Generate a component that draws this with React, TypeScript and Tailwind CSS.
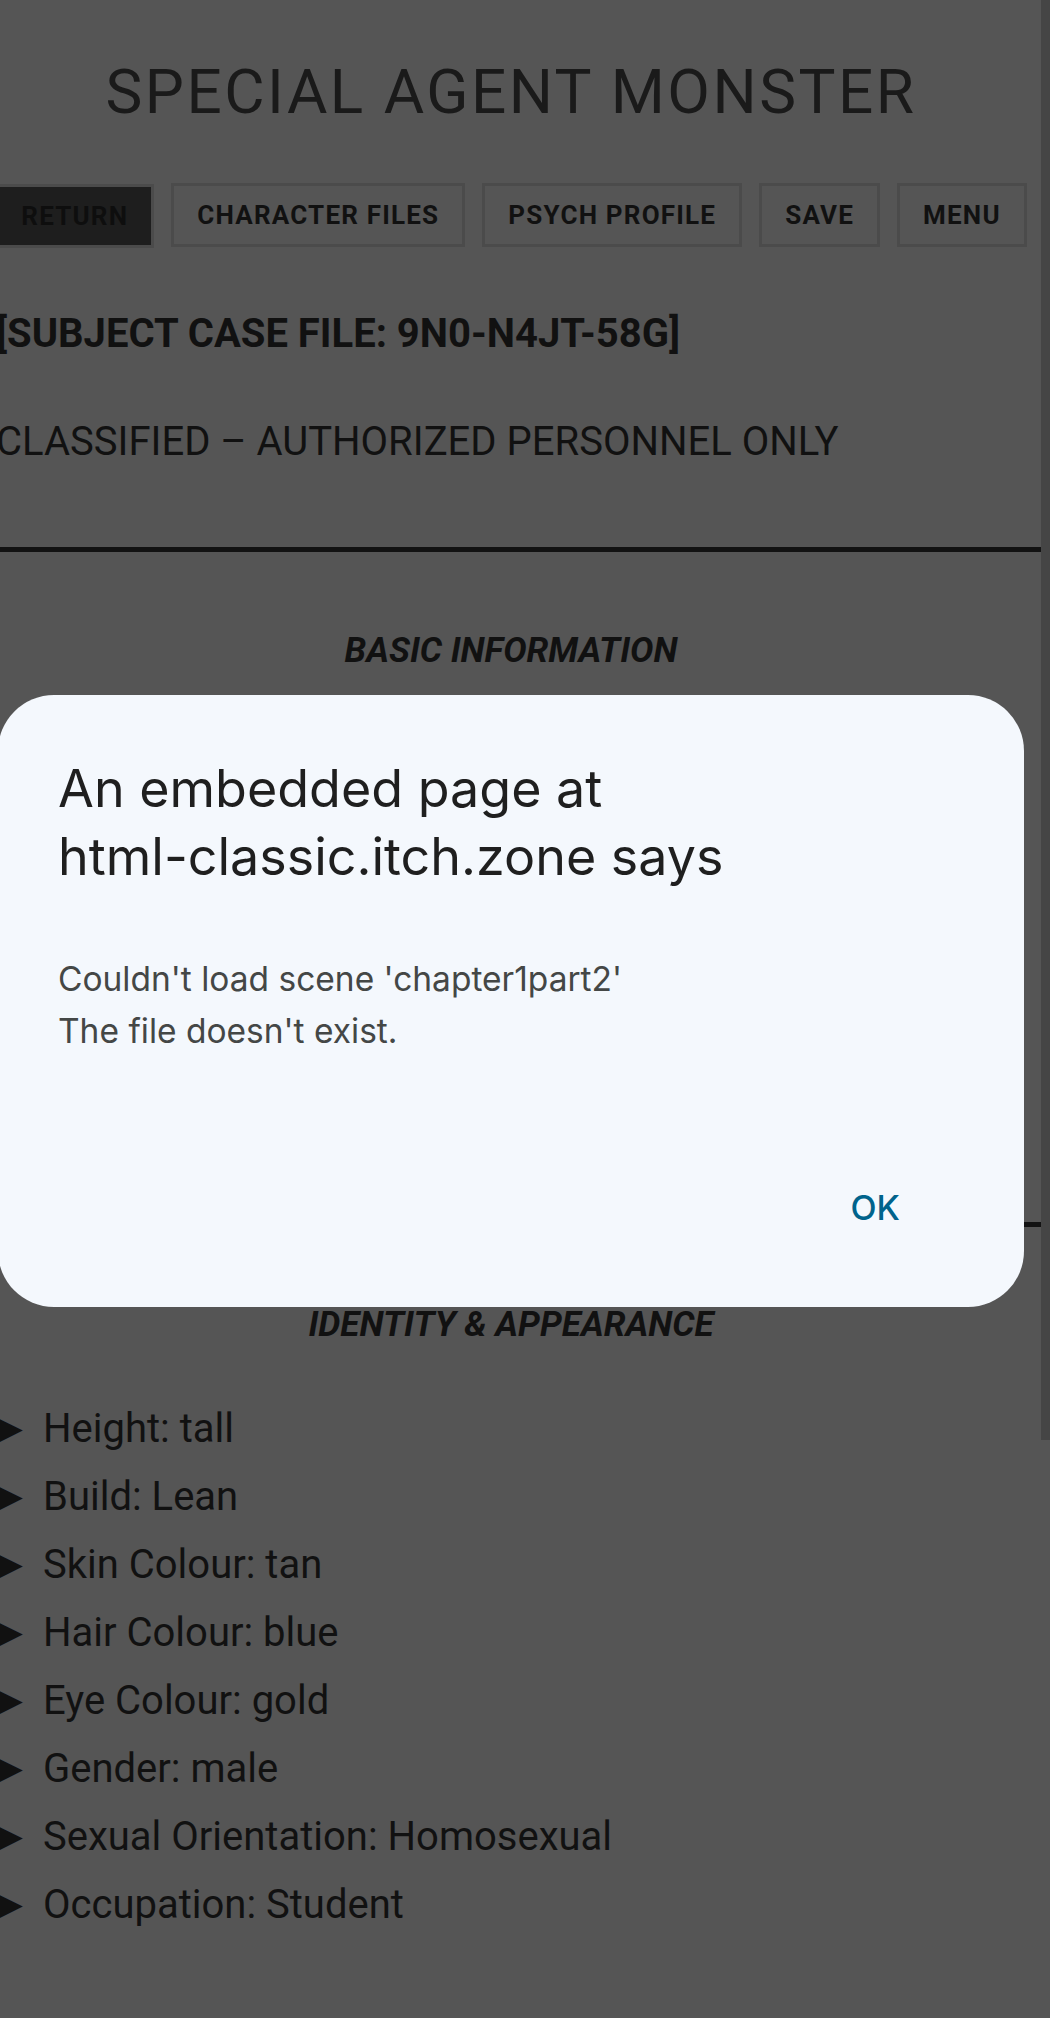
import React from "react";

const items = [
  "Height: tall",
  "Build: Lean",
  "Skin Colour: tan",
  "Hair Colour: blue",
  "Eye Colour: gold",
  "Gender: male",
  "Sexual Orientation: Homosexual",
  "Occupation: Student",
];

const buttons = ["CHARACTER FILES", "PSYCH PROFILE", "SAVE", "MENU"];

export default function App() {
  return (
    <div
      className="relative flex h-[2018px] w-[1050px] overflow-hidden bg-[#555555] text-[#111111]"
      style={{ fontFamily: "Roboto, 'DejaVu Sans', sans-serif" }}
    >
      <main className="w-[1041px] shrink-0 overflow-hidden">
        <div className="-ml-[4px] flex w-[1030px] flex-col pt-[56px]">
          <h1 className="text-center text-[62px] font-normal leading-[72px] tracking-[2.5px] text-[#1a1a1a]">
            SPECIAL AGENT MONSTER
          </h1>

          <nav className="mt-[55px] flex justify-center gap-[17px] whitespace-nowrap">
            <button className="translate-y-[1px] border-[3px] border-[#4b4b4b] bg-[#1e1e1e] px-[23px] py-[14px] text-[26px] font-bold leading-[30px] tracking-[1.2px] text-[#0e0e0e]">
              RETURN
            </button>
            {buttons.map((b) => (
              <button
                key={b}
                className="border-[3px] border-[#4b4b4b] px-[23px] py-[14px] text-[26px] font-bold leading-[30px] tracking-[1.2px] text-[#111111]"
              >
                {b}
              </button>
            ))}
          </nav>

          <h2 className="mt-[63px] whitespace-nowrap text-[40px] font-bold leading-[48px]">
            [SUBJECT CASE FILE: 9N0-N4JT-58G]
          </h2>
          <p className="mt-[60px] whitespace-nowrap text-[40px] font-normal leading-[48px]">
            CLASSIFIED – AUTHORIZED PERSONNEL ONLY
          </p>

          <div className="mt-[81px] h-[5px] w-[1055px] bg-[#121212]" />

          <h3 className="mt-[79px] text-center text-[35px] font-bold italic leading-[40px]">
            BASIC INFORMATION
          </h3>
          <div className="h-[551px]" />

          <div className="h-[5px] w-[1055px] bg-[#121212]" />

          <h3 className="mt-[78px] text-center text-[35px] font-bold italic leading-[40px]">
            IDENTITY &amp; APPEARANCE
          </h3>

          <ul className="mt-[49px] flex flex-col">
            {items.map((it) => (
              <li
                key={it}
                className="flex h-[68px] items-baseline whitespace-nowrap text-[40px] leading-[68px]"
              >
                <span
                  className="-ml-[5px] w-[52px] shrink-0 text-[40px] leading-[68px]"
                  style={{ fontFamily: "'Liberation Sans', sans-serif" }}
                >
                  ►
                </span>
                <span className="leading-[68px]">{it}</span>
              </li>
            ))}
          </ul>
        </div>
      </main>

      <div className="w-[9px] shrink-0">
        <div className="h-[1440px] w-full bg-[#454545]" />
      </div>

      <div
        className="absolute left-[-2px] top-[695px] flex h-[612px] w-[1026px] flex-col rounded-[56px] bg-[#f4f8fd] pl-[60px] pt-[60px]"
        style={{ fontFamily: "Inter, 'Open Sans', sans-serif" }}
      >
        <div className="text-[52px] font-normal leading-[68px] text-[#1f1f1f]">
          <div className="whitespace-nowrap">An embedded page at</div>
          <div className="whitespace-nowrap">html-classic.itch.zone says</div>
        </div>
        <div className="mt-[62px] text-[33.5px] leading-[52px] text-[#444746]">
          <div className="whitespace-nowrap">Couldn't load scene 'chapter1part2'</div>
          <div className="whitespace-nowrap">The file doesn't exist.</div>
        </div>
        <div className="mt-[131px] flex justify-end pr-[124px]">
          <button className="text-[34px] font-medium leading-[40px] text-[#00638c]">OK</button>
        </div>
      </div>
    </div>
  );
}
